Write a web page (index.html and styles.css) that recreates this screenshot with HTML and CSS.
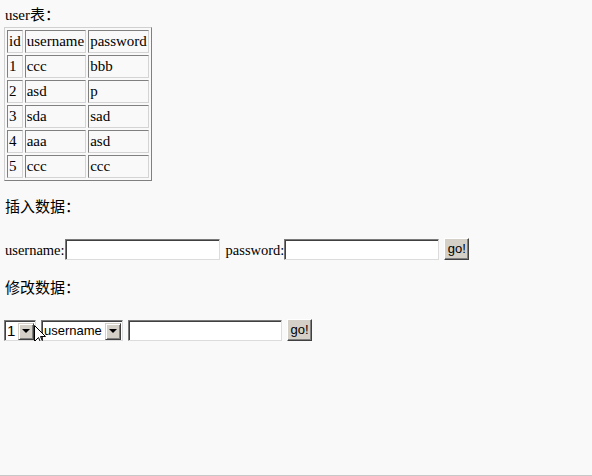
FILE: index.html
```html
<!DOCTYPE html>
<html>
<head>
<meta charset="utf-8">
<title>user表</title>
<link rel="stylesheet" href="styles.css">
</head>
<body>
<div class="title">user表：</div>
<table class="data">
  <tr><td>id</td><td>username</td><td>password</td></tr>
  <tr><td>1</td><td>ccc</td><td>bbb</td></tr>
  <tr><td>2</td><td>asd</td><td>p</td></tr>
  <tr><td>3</td><td>sda</td><td>sad</td></tr>
  <tr><td>4</td><td>aaa</td><td>asd</td></tr>
  <tr><td>5</td><td>ccc</td><td>ccc</td></tr>
</table>
<div class="heading">插入数据：</div>
<div class="row">
  <span class="label">username:</span><input class="field" type="text">
  <span class="label gap">password:</span><input class="field" type="text">
  <button class="go">go!</button>
</div>
<div class="heading second">修改数据：</div>
<div class="row row2">
  <div class="select sel-id"><span class="value">1</span><span class="arrow"></span></div>
  <div class="select sel-col"><span class="value">username</span><span class="arrow"></span></div>
  <input class="field" type="text">
  <button class="go">go!</button>
</div>
<svg class="cursor" width="14" height="22" viewBox="0 0 14 22">
  <polygon points="0.5,0.5 0.5,16.5 4.5,12.5 7.5,19.5 9.5,18.5 6.5,11.5 11.5,11.5" fill="#fff" stroke="#000" stroke-width="1"/>
</svg>
</body>
</html>
```
FILE: styles.css
```css
html {
  height: 100%;
  box-sizing: border-box;
  border-bottom: 1px solid #c8c8c8;
  background: #f9f9f9;
}
body {
  margin: 0;
  padding: 6px 4px 0;
  font: 15px/18px "Liberation Serif", "Noto Sans CJK SC", serif;
  color: #000;
  position: relative;
}
.title {
  line-height: 18px;
  padding-left: 1px;
}
.data {
  margin-top: 3px;
  border-collapse: separate;
  border-spacing: 2px;
  border: 1px solid;
  border-color: #d0d0d0 #808080 #808080 #d0d0d0;
}
.data td {
  border: 1px solid;
  border-color: #808080 #d4d4d4 #d4d4d4 #808080;
  padding: 1px;
  height: 19px;
  line-height: 19px;
  vertical-align: middle;
}
.heading {
  margin-top: 16px;
  line-height: 20px;
  padding-left: 1px;
}
.heading.second {
  margin-top: 18px;
}
.row {
  display: flex;
  align-items: flex-end;
  margin-top: 21px;
  height: 22px;
}
.label {
  font-size: 14.5px;
  line-height: 20px;
  padding-left: 1px;
}
.label.gap {
  margin-left: 5px;
}
.field {
  width: 155px;
  height: 21px;
  box-sizing: border-box;
  margin: 0;
  padding: 0 2px;
  background: #fff;
  border: 1px solid;
  border-color: #7a7a7a #dcdcdc #dcdcdc #7a7a7a;
  box-shadow: inset 1px 1px #404040;
  font: 13px "Liberation Sans", sans-serif;
}
.go {
  margin: 0 0 0 5px;
  width: 25px;
  height: 22px;
  padding: 0 0 1px;
  box-sizing: border-box;
  background: #d4d0c8;
  border: 1px solid;
  border-color: #ffffff #404040 #404040 #ffffff;
  box-shadow: inset -1px -1px #808080;
  font: 13px "Liberation Sans", sans-serif;
  color: #000;
}
.row2 .select,
.row2 .field {
  margin-right: 5px;
}
.row2 .field {
  width: 154px;
}
.row2 .go {
  margin-left: 0;
}
.select {
  display: flex;
  align-items: center;
  height: 21px;
  box-sizing: border-box;
  background: #fff;
  border: 1px solid;
  border-color: #7a7a7a #dcdcdc #dcdcdc #7a7a7a;
  box-shadow: inset 1px 1px #404040;
  padding: 1px 1px 0 2px;
  font: 15px/18px "Liberation Sans", sans-serif;
}
.sel-id {
  width: 32px;
}
.sel-col {
  width: 82px;
}
.value {
  flex: 1;
  white-space: nowrap;
  overflow: hidden;
}
.sel-col .value {
  font-size: 13px;
}
.arrow {
  width: 16px;
  height: 17px;
  box-sizing: border-box;
  background: #d4d0c8;
  border: 1px solid;
  border-color: #d4d0c8 #404040 #404040 #d4d0c8;
  box-shadow: inset 1px 1px #ffffff, inset -1px -1px #808080;
  display: flex;
  align-items: center;
  justify-content: center;
}
.arrow::after {
  content: "";
  border-left: 4px solid transparent;
  border-right: 4px solid transparent;
  border-top: 4px solid #000;
}
.cursor {
  position: absolute;
  left: 34px;
  top: 325px;
}
```
